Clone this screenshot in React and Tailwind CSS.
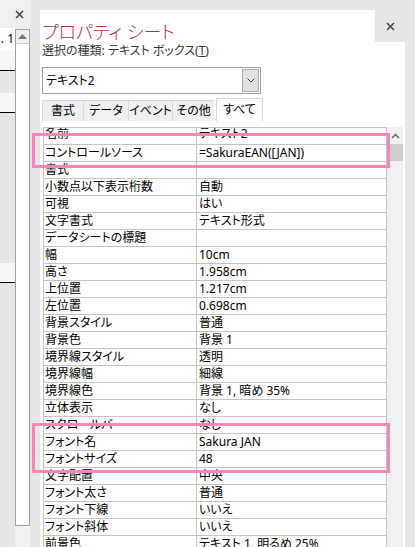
import React from 'react';

const rows = [
  ['名前', 'テキスト2'],
  ['コントロールソース', '=SakuraEAN([JAN])'],
  ['書式', ''],
  ['小数点以下表示桁数', '自動'],
  ['可視', 'はい'],
  ['文字書式', 'テキスト形式'],
  ['データシートの標題', ''],
  ['幅', '10cm'],
  ['高さ', '1.958cm'],
  ['上位置', '1.217cm'],
  ['左位置', '0.698cm'],
  ['背景スタイル', '普通'],
  ['背景色', '背景 1'],
  ['境界線スタイル', '透明'],
  ['境界線幅', '細線'],
  ['境界線色', '背景 1, 暗め 35%'],
  ['立体表示', 'なし'],
  ['スクロールバー', 'なし'],
  ['フォント名', 'Sakura JAN'],
  ['フォントサイズ', '48'],
  ['文字配置', '中央'],
  ['フォント太さ', '普通'],
  ['フォント下線', 'いいえ'],
  ['フォント斜体', 'いいえ'],
  ['前景色', 'テキスト 1, 明るめ 25%'],
];

const tabs = [
  { label: '書式', w: 'w-[41px]' },
  { label: 'データ', w: 'w-[45px]' },
  { label: 'イベント', w: 'w-[44px]' },
  { label: 'その他', w: 'w-[42px]' },
];

const CloseX = () => (
  <svg width="9" height="9" viewBox="0 0 9 9">
    <path d="M1 1L8 8M8 1L1 8" stroke="#444" strokeWidth="1.6" />
  </svg>
);

const App = () => {
  return (
    <div className="relative flex h-[547px] w-[415px] overflow-hidden bg-[#e6e6e6] font-['Noto_Sans','Noto_Sans_CJK_JP',sans-serif] text-[12px] text-black [font-feature-settings:'palt']">
      {/* Left strip (form design view behind) */}
      <div className="flex w-[31px] shrink-0 flex-col">
        <div className="flex h-[28px] items-center justify-end bg-[#f0f0f0] pr-[7px]">
          <CloseX />
        </div>
        <div className="flex flex-1">
          <div className="flex w-[15px] flex-col">
            <div className="h-[22px] overflow-hidden whitespace-nowrap bg-white pr-[1px] text-right leading-[22px]">. 1</div>
            <div className="h-[20px] bg-[#f7f7f7]" />
            <div className="h-px bg-black" />
            <div className="h-[22px] bg-[#e6e6e6]" />
            <div className="h-[19px] bg-[#f7f7f7]" />
            <div className="h-px bg-black" />
            <div className="h-[150px] bg-[#e6e6e6]" />
            <div className="h-[19px] bg-[#f7f7f7]" />
            <div className="h-px bg-black" />
            <div className="flex-1 bg-[#e6e6e6]" />
          </div>
          <div className="flex w-[15px] flex-col bg-[#f0f0f0] pt-px">
            <div className="flex h-[497px] flex-col border border-[#a0a0a0] bg-white">
              <div className="flex h-[14px] items-center justify-center border-b border-[#c8c8c8] bg-[#f0f0f0]">
                <svg width="9" height="5" viewBox="0 0 9 5">
                  <path d="M0 5L4.5 0L9 5Z" fill="#777" />
                </svg>
              </div>
            </div>
          </div>
        </div>
      </div>

      <div className="w-[9px] shrink-0" />

      {/* Property sheet panel */}
      <div className="mt-[10px] flex w-[365px] shrink-0 flex-col bg-white">
        <div className="flex h-[32px]">
          <div className="flex-1 pl-[2px] pt-[12px] text-[18px] leading-[20px] font-light text-[#a4373a]">
            プロパティ シート
          </div>
          <div className="flex w-[30px] items-center justify-center bg-[#e6e6e6]">
            <CloseX />
          </div>
        </div>

        <div className="mt-px h-[16px] pl-[2px] leading-[16px] text-[#333]">
          選択の種類: テキスト ボックス(<span className="underline">T</span>)
        </div>

        <div className="ml-[2px] mt-[8px] flex h-[27px] w-[219px] items-center border border-[#a0a0a0]">
          <div className="flex-1 pl-[3px] leading-[16px]">テキスト2</div>
          <div className="mr-px flex h-[23px] w-[17px] items-center justify-center border border-[#adadad] bg-[#e1e1e1]">
            <svg width="8" height="5" viewBox="0 0 8 5">
              <path d="M0.5 0.5L4 4L7.5 0.5" stroke="#444" strokeWidth="1" fill="none" />
            </svg>
          </div>
        </div>

        <div className="ml-[2px] mt-[4px] flex h-[23px] items-end">
          {tabs.map((t) => (
            <div
              key={t.label}
              className={`${t.w} flex h-[21px] items-center justify-center border border-b-0 border-r-0 border-[#d9d9d9] bg-[#f0f0f0] leading-[16px]`}
            >
              {t.label}
            </div>
          ))}
          <div className="ml-[2px] flex h-[23px] w-[47px] items-center justify-center border border-b-0 border-[#d9d9d9] bg-white leading-[16px]">
            すべて
          </div>
        </div>

        <div className="ml-[3px] mt-[6px] flex min-h-0 flex-1">
          <div className="flex w-[344px] flex-col overflow-hidden border-x border-t border-[#c4c4c4]">
            {rows.map(([name, value], i) => (
              <div key={name} className="flex h-[17px] shrink-0 overflow-hidden border-b border-[#c4c4c4] leading-[16px]">
                <div className="w-[153px] shrink-0 overflow-hidden whitespace-nowrap border-r border-[#c4c4c4] pl-[1px]">
                  <div className={i === 0 ? '-mt-[2px]' : ''}>{name}</div>
                </div>
                <div className="flex-1 overflow-hidden whitespace-nowrap pl-[2px]">
                  <div className={i === 0 ? '-mt-[2px]' : ''}>{value}</div>
                </div>
              </div>
            ))}
          </div>
          <div className="flex w-[16px] flex-col bg-[#f0f0f0]">
            <div className="flex h-[17px] items-center justify-center">
              <svg width="9" height="6" viewBox="0 0 9 6">
                <path d="M1 5L4.5 1.5L8 5" stroke="#606060" strokeWidth="1.5" fill="none" />
              </svg>
            </div>
            <div className="ml-[1px] h-[17px] bg-[#cdcdcd]" />
          </div>
        </div>
      </div>

      {/* Pink highlight boxes */}
      <div className="absolute left-[32px] top-[133px] h-[35px] w-[358px] border-[3px] border-[#fa86b9]" />
      <div className="absolute left-[32px] top-[423px] h-[50px] w-[358px] border-[3px] border-[#fa86b9]" />
    </div>
  );
};

export default App;
